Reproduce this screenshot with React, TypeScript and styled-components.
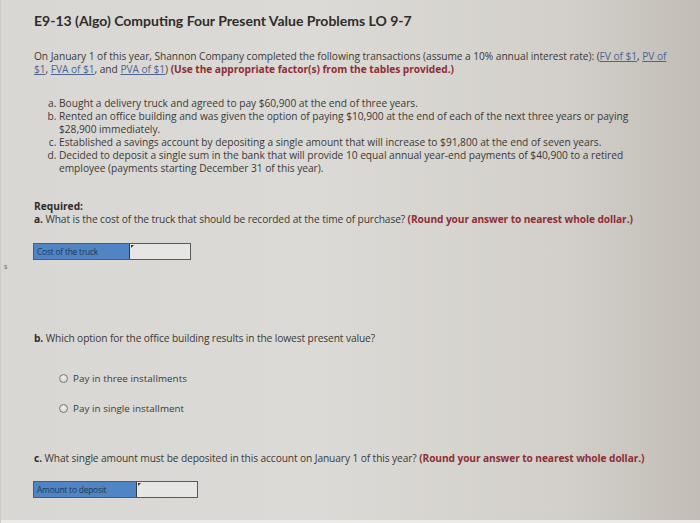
import React from "react";
import styled, { createGlobalStyle } from "styled-components";

const GlobalStyle = createGlobalStyle`
  html, body {
    margin: 0;
    padding: 0;
  }
  body {
    width: 700px;
    height: 523px;
    overflow: hidden;
    font-family: "Open Sans", Lato, sans-serif;
    color: #3a3936;
  }
`;

const Page = styled.div`
  position: relative;
  width: 700px;
  height: 523px;
  box-sizing: border-box;
  padding: 12px 26px 0 33px;
  background: linear-gradient(90deg, #d9d7d3 0%, #dcdad6 45%, #d3d0cb 80%, #c2bdb6 100%);
  border-left: 1px solid #cfccc7;
`;

const Title = styled.h1`
  margin: 0;
  font-family: Lato, "Open Sans", sans-serif;
  font-size: 14px;
  font-weight: 700;
  color: #2e2d2a;
`;

const Intro = styled.p`
  margin: 21px 0 0;
  font-size: 10.2px;
  line-height: 13px;
  letter-spacing: -0.05px;
`;

const Link = styled.a`
  color: #4d6590;
  text-decoration: underline;
`;

const Emph = styled.span`
  color: #8e2e36;
  font-weight: 700;
`;

const List = styled.ol`
  margin: 21px 30px 0 0;
  padding: 0 0 0 25px;
  list-style: lower-alpha;
  font-size: 10.2px;
  line-height: 13px;
  letter-spacing: -0.02px;

  li::marker {
    content: counter(list-item, lower-alpha) ". ";
  }
`;

const Required = styled.div`
  margin-top: 25px;
  font-size: 10.2px;
  line-height: 13px;
`;

const Strong = styled.strong`
  font-weight: 700;
  color: #2e2d2a;
`;

const Question = styled.div<{ $gap?: number }>`
  margin-top: ${(p) => p.$gap ?? 0}px;
  font-size: 10.2px;
  line-height: 13px;
  letter-spacing: -0.1px;
`;

const AnswerRow = styled.div<{ $gap: number }>`
  display: flex;
  margin-top: ${(p) => p.$gap}px;
  margin-left: -1px;
  height: 15px;
  border: 1px solid #5a5a5a;
  width: fit-content;
`;

const AnswerLabel = styled.div<{ $w: number }>`
  width: ${(p) => p.$w}px;
  background: #4f85c4;
  color: #1e3656;
  font-size: 8.4px;
  line-height: 15px;
  letter-spacing: -0.2px;
  padding-left: 3px;
  box-sizing: border-box;
  white-space: nowrap;
  overflow: hidden;
`;

const AnswerInput = styled.div<{ $w: number }>`
  width: ${(p) => p.$w}px;
  background: #e6e6e5;
  border-left: 1px solid #3a3a3a;
  position: relative;

  &::before {
    content: "";
    position: absolute;
    left: 1px;
    top: 1px;
    width: 0;
    height: 0;
    border-left: 3px solid #333;
    border-bottom: 3px solid transparent;
  }
`;

const Options = styled.div`
  display: flex;
  flex-direction: column;
  gap: 17px;
  margin: 27px 0 0 25px;
`;

const Option = styled.label`
  display: flex;
  align-items: center;
  gap: 5px;
  font-size: 9.8px;
  line-height: 13px;
  letter-spacing: 0.05px;
`;

const Radio = styled.span`
  width: 9px;
  height: 9px;
  border-radius: 50%;
  border: 1px solid #7c7c7a;
  background: radial-gradient(circle at 50% 40%, #f2f2f0 0%, #c9c9c6 100%);
  box-sizing: border-box;
`;

const SideMark = styled.span`
  position: absolute;
  left: 3px;
  top: 262px;
  font-size: 7px;
  color: #555;
`;

const BottomEdge = styled.div`
  position: absolute;
  left: 0;
  right: 0;
  bottom: 0;
  height: 3px;
  background: #ecebe9;
`;

export default function App() {
  return (
    <>
      <GlobalStyle />
      <Page>
        <Title>E9-13 (Algo) Computing Four Present Value Problems LO 9-7</Title>
        <Intro>
          On January 1 of this year, Shannon Company completed the following transactions (assume a 10% annual
          interest rate): (<Link>FV of $1</Link>, <Link>PV of $1</Link>, <Link>FVA of $1</Link>, and{" "}
          <Link>PVA of $1</Link>) <Emph>(Use the appropriate factor(s) from the tables provided.)</Emph>
        </Intro>
        <List>
          <li>Bought a delivery truck and agreed to pay $60,900 at the end of three years.</li>
          <li>
            Rented an office building and was given the option of paying $10,900 at the end of each of the next
            three years or paying $28,900 immediately.
          </li>
          <li>Established a savings account by depositing a single amount that will increase to $91,800 at the end of seven years.</li>
          <li>
            Decided to deposit a single sum in the bank that will provide 10 equal annual year-end payments of
            $40,900 to a retired employee (payments starting December 31 of this year).
          </li>
        </List>
        <Required>
          <Strong>Required:</Strong>
        </Required>
        <Question>
          <Strong>a.</Strong> What is the cost of the truck that should be recorded at the time of purchase?{" "}
          <Emph>(Round your answer to nearest whole dollar.)</Emph>
        </Question>
        <AnswerRow $gap={17}>
          <AnswerLabel $w={95}>Cost of the truck</AnswerLabel>
          <AnswerInput $w={60} />
        </AnswerRow>
        <Question $gap={72}>
          <Strong>b.</Strong> Which option for the office building results in the lowest present value?
        </Question>
        <Options>
          <Option>
            <Radio />
            Pay in three installments
          </Option>
          <Option>
            <Radio />
            Pay in single installment
          </Option>
        </Options>
        <Question $gap={37}>
          <Strong>c.</Strong> What single amount must be deposited in this account on January 1 of this year?{" "}
          <Emph>(Round your answer to nearest whole dollar.)</Emph>
        </Question>
        <AnswerRow $gap={16}>
          <AnswerLabel $w={102}>Amount to deposit</AnswerLabel>
          <AnswerInput $w={60} />
        </AnswerRow>
        <SideMark>s</SideMark>
        <BottomEdge />
      </Page>
    </>
  );
}
